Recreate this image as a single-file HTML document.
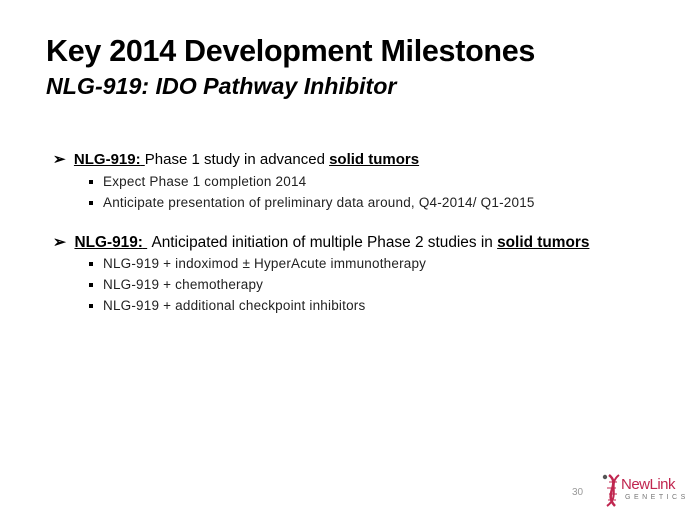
<!DOCTYPE html>
<html><head><style>
body{margin:0;width:690px;height:522px;background:#fff;font-family:"Liberation Sans",sans-serif;position:relative;overflow:hidden;color:#000}
.a{position:absolute;white-space:nowrap}
.t1{left:46px;top:34px;font-size:30.5px;font-weight:bold;letter-spacing:-0.3px}
.t2{left:46px;top:73px;font-size:23.2px;font-weight:bold;font-style:italic}
.l1{font-size:15px;left:53px}
.l2{font-size:13.5px;left:103px;color:#222;letter-spacing:0.2px}
.l2 .b{position:absolute;left:-14px;top:6px;width:4px;height:4px;background:#000}
u{text-decoration-thickness:1px}
.ar{font-weight:bold}
</style></head><body>
<div class="a t1">Key 2014 Development Milestones</div>
<div class="a t2">NLG-919: IDO Pathway Inhibitor</div>
<div class="a l1" style="top:150px"><span class="ar">➢</span>&nbsp; <u><b>NLG-919:</b> </u>Phase 1 study in advanced <u><b>solid tumors</b></u></div>
<div class="a l2" style="top:174px"><span class="b"></span>Expect Phase 1 completion 2014</div>
<div class="a l2" style="top:195px"><span class="b"></span>Anticipate presentation of preliminary data around, Q4-2014/ Q1-2015</div>
<div class="a l1" style="top:233px;font-size:15.4px"><span class="ar">➢</span>&nbsp; <u><b>NLG-919:</b> </u>&nbsp;Anticipated initiation of multiple Phase 2 studies in <u><b>solid tumors</b></u></div>
<div class="a l2" style="top:256px"><span class="b"></span>NLG-919 + indoximod ± HyperAcute immunotherapy</div>
<div class="a l2" style="top:277px"><span class="b"></span>NLG-919 + chemotherapy</div>
<div class="a l2" style="top:298px"><span class="b"></span>NLG-919 + additional checkpoint inhibitors</div>
<div class="a" style="left:572px;top:487px;font-size:10px;color:#999">30</div>
<svg class="a" style="left:601px;top:472px" width="22" height="36" viewBox="0 0 22 36">
<path d="M8 3 C20 12,2 22,14 34" stroke="#c0264f" stroke-width="2.5" fill="none"/>
<path d="M18 3 C6 12,20 24,6 34" stroke="#c0264f" stroke-width="2" fill="none"/>
<path d="M8 10h8M6 16h9M8 22h8M7 28h8" stroke="#c0264f" stroke-width="1"/>
<circle cx="4" cy="5" r="2.2" fill="#555"/>
</svg>
<div class="a" style="left:621px;top:476px;font-size:15px;color:#c0264f;letter-spacing:-0.5px">NewLink</div>
<div class="a" style="left:625px;top:494px;font-size:7px;color:#777;letter-spacing:3.5px">GENETICS</div>
</body></html>
